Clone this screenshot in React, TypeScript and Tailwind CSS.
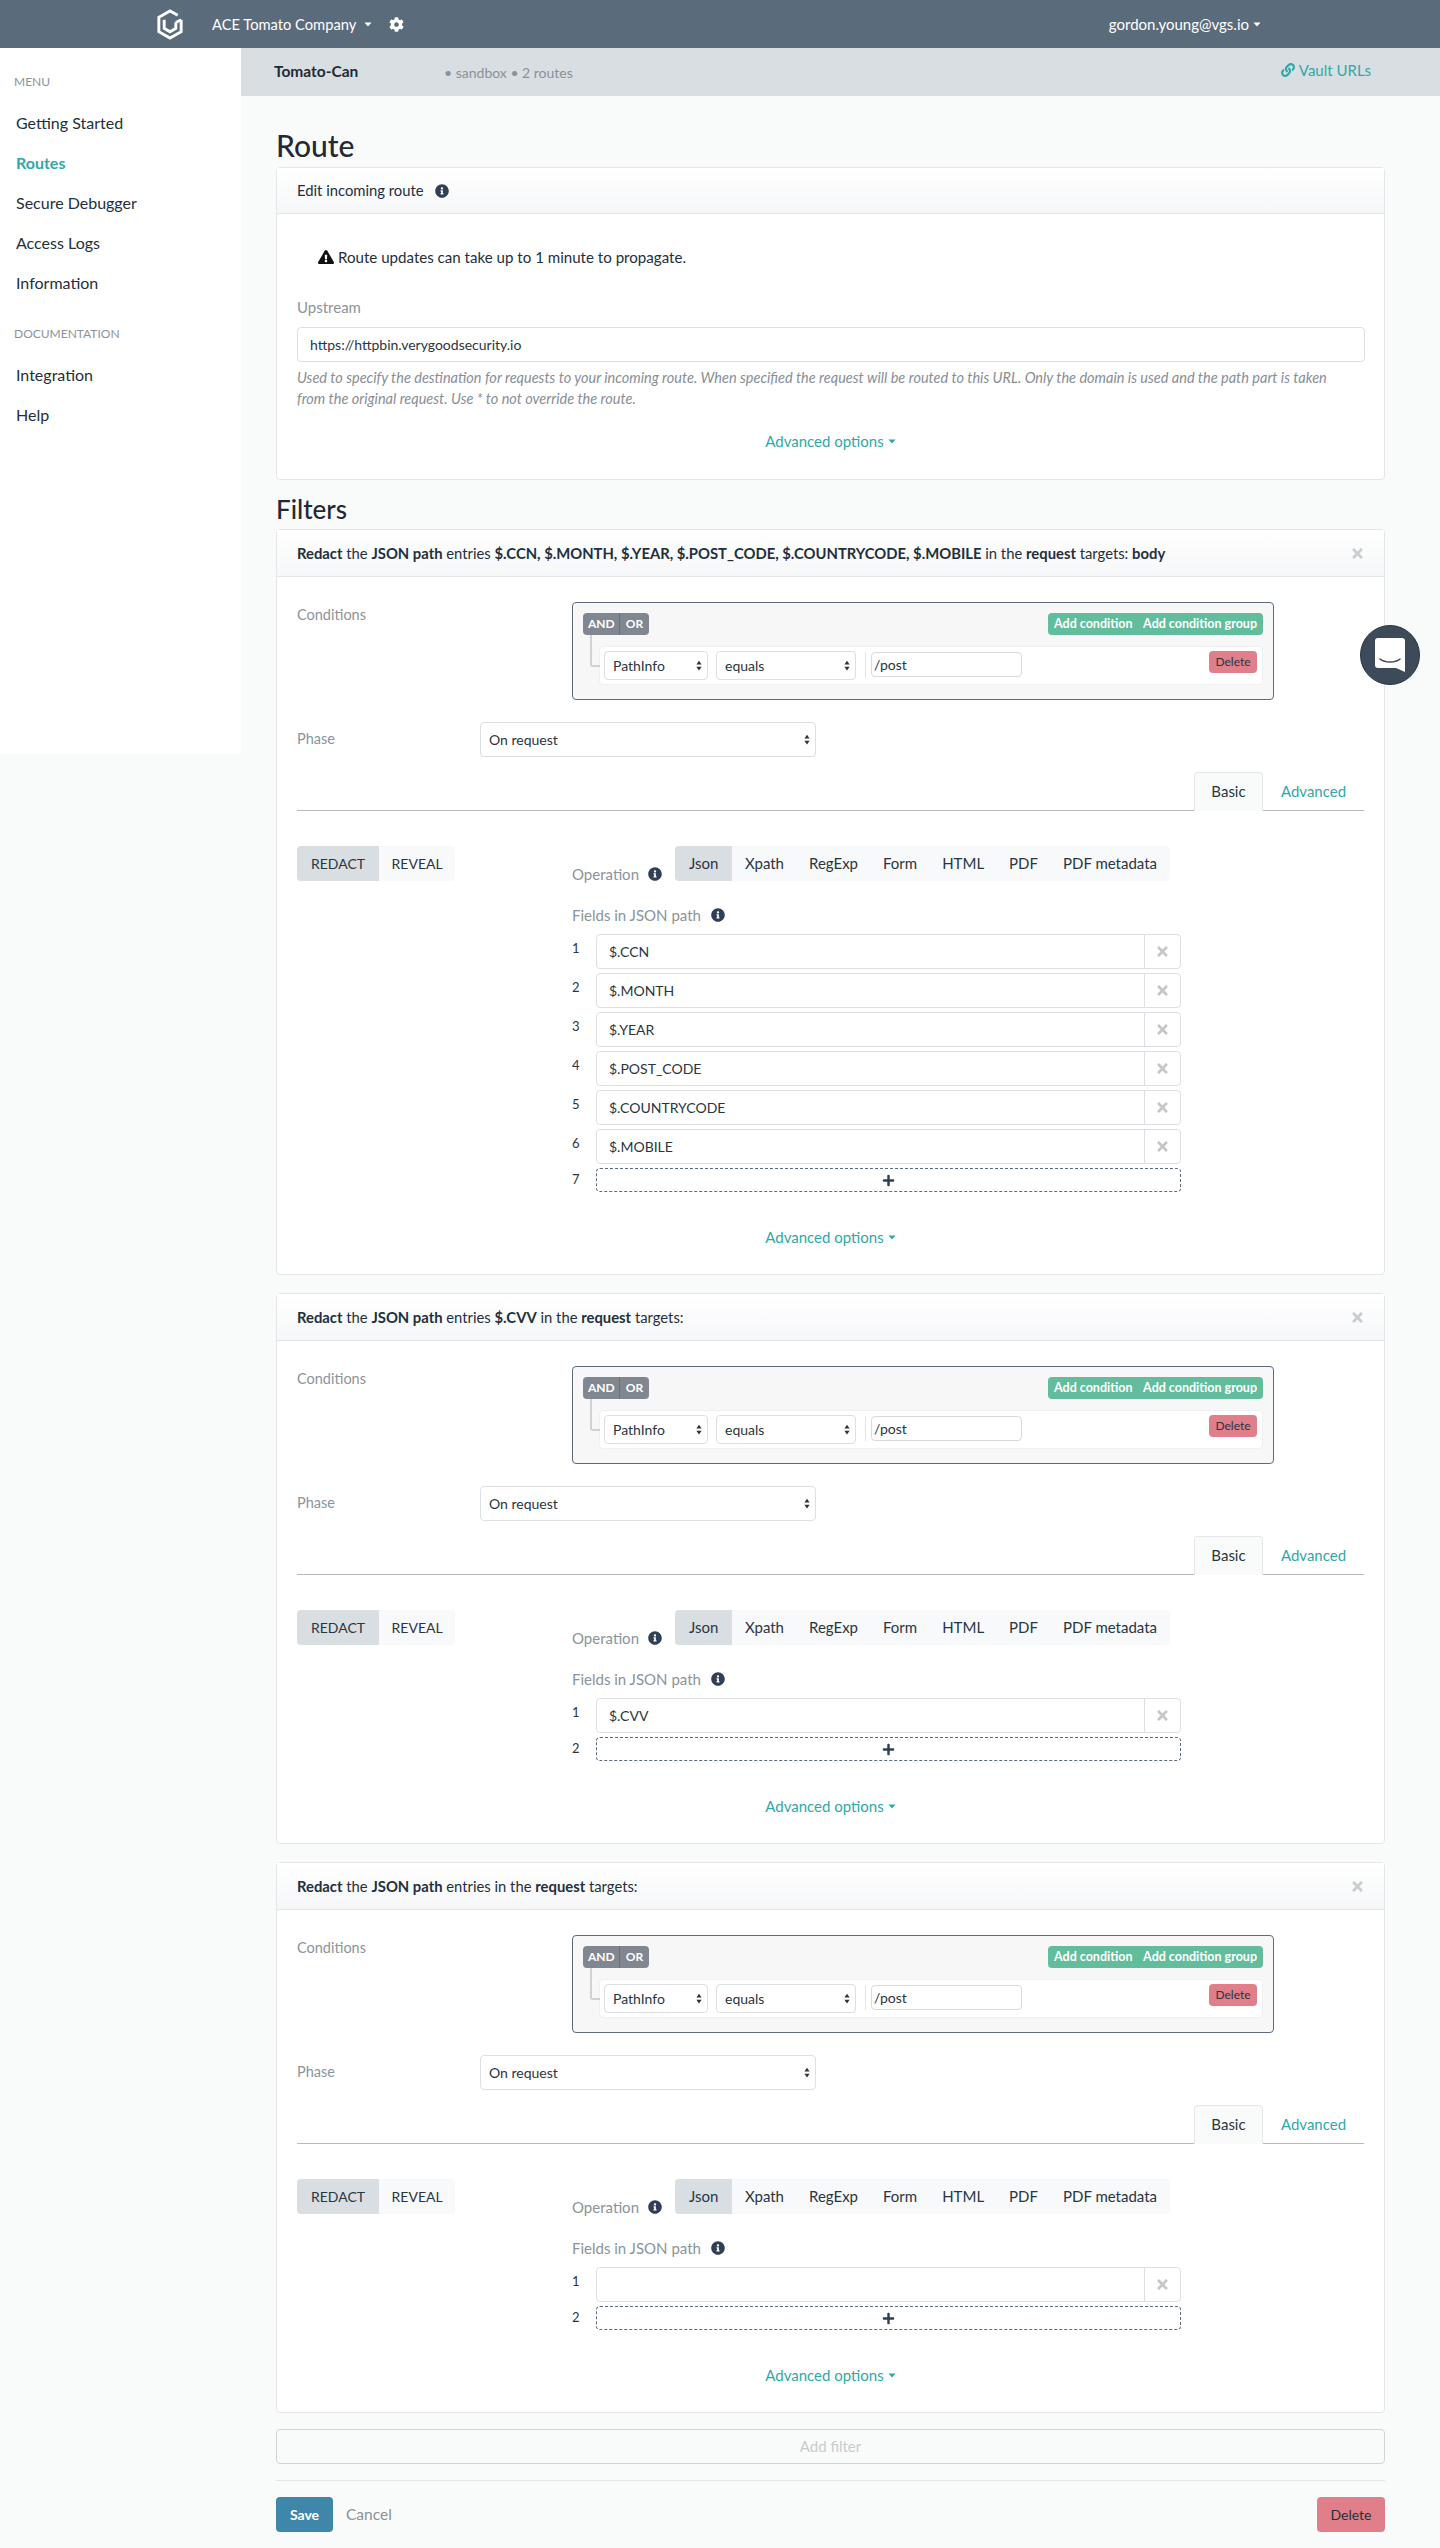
import React from 'react';
import { FaCog, FaTimes, FaPlus, FaLink, FaInfoCircle, FaExclamationTriangle } from 'react-icons/fa';

const font = { fontFamily: 'Lato, "Noto Sans", sans-serif' };

const Caret = ({ className = '' }: { className?: string }) => (
  <svg viewBox="0 0 10 6" className={`inline-block w-[8px] h-[5px] ${className}`} fill="currentColor">
    <path d="M0.5 0.5h9L5 5.5z" />
  </svg>
);

const Info = () => <FaInfoCircle size={14} className="shrink-0 text-[#2f4054]" />;

const SelectArrows = () => (
  <svg viewBox="0 0 8 14" className="w-[6px] h-[11px] text-[#333]" fill="currentColor">
    <path d="M4 0.5L7.5 5.5H0.5z" />
    <path d="M4 13.5L0.5 8.5h7z" />
  </svg>
);

const Select = ({ label, className }: { label: string; className: string }) => (
  <div className={`flex items-center justify-between bg-white border border-[#dcdfe3] rounded-[4px] ${className}`}>
    <span>{label}</span>
    <SelectArrows />
  </div>
);

const AdvancedOptions = ({ className = '' }: { className?: string }) => (
  <div className={`flex items-center justify-center gap-[4px] text-[15px] text-[#2fa8a8] ${className}`}>
    Advanced options <Caret />
  </div>
);

const Segmented = ({ items, className = '' }: { items: string[]; className?: string }) => (
  <div className={`flex h-[35px] rounded-[4px] bg-[#f7f9fb] overflow-hidden text-[#2a3542] ${className}`}>
    {items.map((item, i) => (
      <div key={item} className={`flex items-center ${i === 0 ? 'px-[14px] bg-[#d9dee2]' : 'px-[12.5px]'}`}>
        {item}
      </div>
    ))}
  </div>
);

const Conditions = () => (
  <div className="relative w-[702px] h-[98px] border border-[#5d6b7a] rounded-[4px] bg-[#f7f7f7] px-[10px] pt-[10px]">
    <div className="flex justify-between">
      <div className="flex h-[22px] rounded-[4px] bg-[#808790] text-white text-[12px] font-bold leading-[22px]">
        <span className="px-[5px] w-[37px] text-center border-r border-[#67707a]">AND</span>
        <span className="w-[29px] text-center">OR</span>
      </div>
      <div className="flex items-center justify-between w-[215px] h-[22px] px-[6px] rounded-[4px] bg-[#62bd9d] text-white text-[12.5px] font-bold">
        <span>Add condition</span>
        <span>Add condition group</span>
      </div>
    </div>
    <div className="absolute left-[17px] top-[32px] w-[10px] h-[32px] border-l-2 border-b-2 border-[#cfd2d4] rounded-bl-[3px]" />
    <div className="flex items-start ml-[16px] mt-[11px] h-[39px] bg-white border border-[#f0f0f0] rounded-[4px] pl-[4px] pr-[5px] pt-[4px] text-[14px] text-[#2a3542]">
      <Select label="PathInfo" className="w-[104px] h-[29px] pl-[8px] pr-[5px]" />
      <Select label="equals" className="ml-[8px] w-[140px] h-[29px] pl-[8px] pr-[5px]" />
      <div className="ml-[9px] mt-[1px] h-[25px] w-px bg-[#e3e5e7]" />
      <input
        readOnly
        defaultValue="/post"
        className="ml-[5px] mt-[1px] w-[151px] h-[25px] px-[2px] text-[14px] border border-[#d8dade] rounded-[4px] bg-white outline-none"
      />
      <button className="ml-auto h-[22px] w-[48px] rounded-[4px] bg-[#e07f8a] text-[12px] text-[#2a3542]">Delete</button>
    </div>
  </div>
);

const FieldRow = ({ n, value }: { n: number; value: string }) => (
  <div className="flex items-start">
    <span className="w-[24px] pt-[5px] text-[13px] text-[#2a3542]">{n}</span>
    <div className="flex w-[585px] h-[35px] border border-[#dcdfe3] rounded-[4px] bg-white">
      <input
        readOnly
        defaultValue={value}
        className="flex-1 min-w-0 px-[12px] text-[14px] text-[#2a3542] bg-transparent outline-none"
      />
      <div className="flex items-center justify-center w-[36px] border-l border-[#dcdfe3]">
        <FaTimes size={15} className="text-[#c4c7ca]" />
      </div>
    </div>
  </div>
);

const FilterCard = ({ title, fields }: { title: React.ReactNode; fields: string[] }) => (
  <div className="border border-[#e4e6e8] rounded-[4px] bg-white h-fit">
    <div className="flex items-center justify-between h-[47px] px-[20px] border-b border-[#e4e6e8] bg-gradient-to-b from-white to-[#f6f7f9] text-[14.8px] text-[#232f3c]">
      <div>{title}</div>
      <FaTimes size={15} className="text-[#c9cdd2] -mr-[1px]" />
    </div>
    <div className="px-[20px]">
      <div className="flex pt-[25px]">
        <div className="w-[275px] pt-[2px] text-[14.5px] text-[#8a949c]">Conditions</div>
        <Conditions />
      </div>
      <div className="flex items-center mt-[22px]">
        <div className="w-[183px] pb-[2px] text-[14.5px] text-[#8a949c]">Phase</div>
        <Select label="On request" className="w-[336px] h-[35px] pl-[8px] pr-[5px] text-[14px] text-[#2a3542]" />
      </div>
      <div className="flex justify-end mt-[15px] h-[39px] border-b border-[#b5babe]">
        <div className="flex items-center justify-center w-[69px] h-[39px] border border-[#e4e6e8] border-b-[#f9fbfb] rounded-t-[4px] bg-[#f9fbfb] text-[15px] text-[#2a3542]">
          Basic
        </div>
        <div className="flex items-center justify-center w-[101px] text-[15px] text-[#2fa8a8]">Advanced</div>
      </div>
      <div className="flex mt-[35px]">
        <div className="w-[275px]">
          <Segmented items={['REDACT', 'REVEAL']} className="w-fit text-[14px]" />
        </div>
        <div>
          <div className="flex items-end">
            <div className="flex items-center w-[103px] gap-[9px] h-[14px] text-[15px] text-[#8a949c]">
              Operation <Info />
            </div>
            <Segmented items={['Json', 'Xpath', 'RegExp', 'Form', 'HTML', 'PDF', 'PDF metadata']} className="text-[15px]" />
          </div>
          <div className="flex items-center gap-[10px] mt-[24px] h-[20px] text-[15px] text-[#8a949c]">
            Fields in JSON path <Info />
          </div>
          <div className="flex flex-col gap-[4px] mt-[9px]">
            {fields.map((value, i) => (
              <FieldRow key={i} n={i + 1} value={value} />
            ))}
            <div className="flex items-center">
              <span className="w-[24px] text-[13px] text-[#2a3542]">{fields.length + 1}</span>
              <div className="flex items-center justify-center w-[585px] h-[24px] border border-dashed border-[#5d6b7a] rounded-[4px]">
                <FaPlus size={13} className="text-[#2f4054]" />
              </div>
            </div>
          </div>
        </div>
      </div>
      <AdvancedOptions className="h-[82px] pt-[8px]" />
    </div>
  </div>
);

const sideItems = ['Getting Started', 'Routes', 'Secure Debugger', 'Access Logs', 'Information'];

export default function App() {
  return (
    <div style={font} className="relative w-[1440px] h-[2548px] bg-[#f9fbfb] overflow-hidden">
      <header className="flex items-center h-[48px] bg-[#5a6b7b] text-white text-[15px]">
        <svg viewBox="0 0 28 32" className="ml-[156px] w-[28px] h-[31px]" fill="none" stroke="#fff" strokeWidth="3">
          <path d="M22 6.5L14 2 2.5 8.5v15L14 30l11.5-6.5V11" />
          <path d="M8 11v9l6 3.5 6-3.5v-6" />
          <path d="M20 14l5.5-3" />
        </svg>
        <span className="ml-[28px] text-[14.7px]">ACE Tomato Company</span>
        <Caret className="ml-[8px]" />
        <FaCog size={15} className="ml-[17px]" />
        <div className="ml-auto mr-[179px] flex items-center gap-[4px]">
          <span>gordon.young@vgs.io</span>
          <Caret />
        </div>
      </header>

      <div className="flex">
        <aside className="w-[241px] h-[706px] shrink-0 bg-white pl-[16px] text-[16px] text-[#232f3c]">
          <div className="-ml-[2px] mt-[25px] mb-[20px] text-[12px] text-[#8a949c]">MENU</div>
          <div className="flex flex-col gap-[16px]">
            {sideItems.map((item) => (
              <div key={item} className={`h-[24px] leading-[24px] ${item === 'Routes' ? 'text-[#2fa8a8] font-bold' : ''}`}>
                {item}
              </div>
            ))}
          </div>
          <div className="-ml-[2px] mt-[30px] mb-[20px] text-[12px] text-[#8a949c]">DOCUMENTATION</div>
          <div className="flex flex-col gap-[16px]">
            <div className="h-[24px] leading-[24px]">Integration</div>
            <div className="h-[24px] leading-[24px]">Help</div>
          </div>
        </aside>

        <main className="flex-1 min-w-0">
          <div className="flex items-center h-[48px] bg-[#d9dee2] pl-[33px] pr-[69px] text-[14px]">
            <span className="w-[170px] text-[15.5px] font-bold text-[#1f2a36]">Tomato-Can</span>
            <span className="text-[#8a9199]">• sandbox • 2 routes</span>
            <span className="ml-auto -mt-[4px] flex items-center gap-[4px] text-[15px] text-[#2fa8a8]">
              <FaLink size={14} />
              Vault URLs
            </span>
          </div>

          <div className="pl-[35px] pr-[55px]">
            <h1 className="h-[71px] pt-[30px] text-[30px] font-medium leading-[38px] text-[#1f2a36]">Route</h1>

            <div className="h-[313px] border border-[#e4e6e8] rounded-[4px] bg-white">
              <div className="flex items-center gap-[11px] h-[46px] px-[20px] border-b border-[#e4e6e8] bg-gradient-to-b from-white to-[#f6f7f9] text-[14.8px] text-[#232f3c]">
                Edit incoming route <Info />
              </div>
              <div className="px-[20px]">
                <div className="flex items-center gap-[4px] ml-[21px] mt-[33px] h-[20px] text-[15.1px] text-[#232f3c]">
                  <FaExclamationTriangle size={16} className="text-[#111]" />
                  Route updates can take up to 1 minute to propagate.
                </div>
                <div className="mt-[30px] h-[20px] text-[15px] leading-[20px] text-[#8a949c]">Upstream</div>
                <input
                  readOnly
                  defaultValue="https://httpbin.verygoodsecurity.io"
                  className="block mt-[10px] w-[1068px] h-[35px] px-[12px] text-[14px] text-[#2a3542] bg-white border border-[#dcdfe3] rounded-[4px] outline-none"
                />
                <p className="mt-[5px] text-[14.5px] leading-[21px] italic text-[#878e96] whitespace-nowrap">
                  Used to specify the destination for requests to your incoming route. When specified the request will be routed to this URL. Only the domain is used and the path part is taken
                  <br />
                  from the original request. Use * to not override the route.
                </p>
                <AdvancedOptions className="mt-[21px]" />
              </div>
            </div>

            <h2 className="h-[49px] pt-[14px] text-[26px] font-medium leading-[30px] text-[#1f2a36]">Filters</h2>

            <div className="flex flex-col gap-[18px]">
              <FilterCard
                fields={['$.CCN', '$.MONTH', '$.YEAR', '$.POST_CODE', '$.COUNTRYCODE', '$.MOBILE']}
                title={
                  <>
                    <b>Redact</b> the <b>JSON path</b> entries <b>$.CCN, $.MONTH, $.YEAR, $.POST_CODE, $.COUNTRYCODE, $.MOBILE</b> in the <b>request</b> targets: <b>body</b>
                  </>
                }
              />
              <FilterCard
                fields={['$.CVV']}
                title={
                  <>
                    <b>Redact</b> the <b>JSON path</b> entries <b>$.CVV</b> in the <b>request</b> targets:
                  </>
                }
              />
              <FilterCard
                fields={['']}
                title={
                  <>
                    <b>Redact</b> the <b>JSON path</b> entries in the <b>request</b> targets:
                  </>
                }
              />
            </div>

            <div className="flex items-center justify-center mt-[16px] h-[35px] border border-[#d0d3d5] rounded-[4px] text-[15px] text-[#c8cbce]">
              Add filter
            </div>
            <div className="mt-[16px] border-t border-[#e4e6e8]" />
            <div className="flex items-center mt-[16px]">
              <button className="w-[57px] h-[35px] rounded-[4px] bg-[#3e87ab] text-white text-[14px] font-bold">Save</button>
              <span className="ml-[13px] text-[15.5px] text-[#8a9199]">Cancel</span>
              <button className="ml-auto w-[68px] h-[35px] rounded-[4px] bg-[#e07f8a] text-[14px] text-[#232f3c]">Delete</button>
            </div>
          </div>
        </main>
      </div>

      {/* chat launcher */}
      <div className="absolute left-[1360px] top-[625px] flex items-center justify-center w-[60px] h-[60px] rounded-full bg-[#3d4a5a] border border-[#2a3542]">
        <svg viewBox="0 0 30 34" className="w-[30px] h-[34px]">
          <path d="M3 0h24a3 3 0 0 1 3 3v31l-9-4H3a3 3 0 0 1-3-3V3a3 3 0 0 1 3-3z" fill="#fff" />
          <path d="M5 21c5 4 15 4 20 0" fill="none" stroke="#3d4a5a" strokeWidth="1.6" strokeLinecap="round" />
        </svg>
      </div>
    </div>
  );
}
